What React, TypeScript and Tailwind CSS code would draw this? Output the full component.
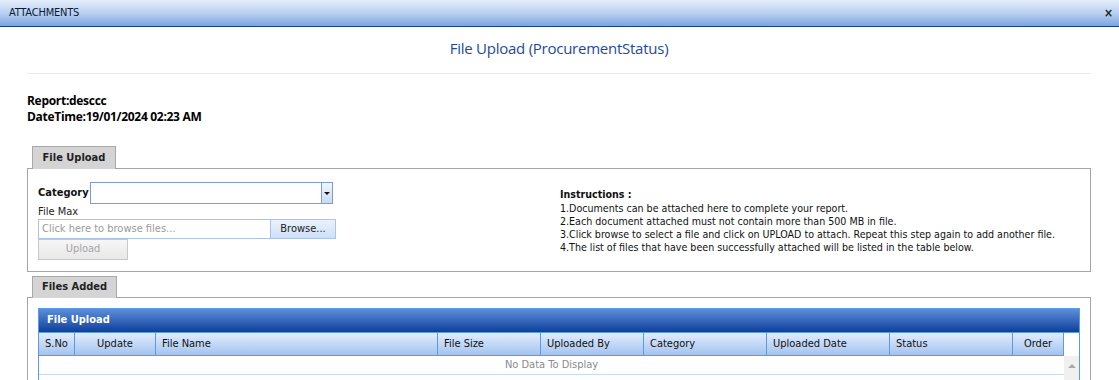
import React from "react";

const cols: { label: string; w: number; align: "left" | "center" }[] = [
  { label: "S.No", w: 36, align: "left" },
  { label: "Update", w: 81, align: "center" },
  { label: "File Name", w: 282, align: "left" },
  { label: "File Size", w: 103, align: "left" },
  { label: "Uploaded By", w: 103, align: "left" },
  { label: "Category", w: 123, align: "left" },
  { label: "Uploaded Date", w: 123, align: "left" },
  { label: "Status", w: 123, align: "left" },
  { label: "Order", w: 51, align: "center" },
];

export default function App() {
  const tahoma = "font-['DejaVu_Sans_Condensed','Liberation_Sans',sans-serif]";
  return (
    <div className={`w-[1119px] h-[380px] overflow-hidden bg-white text-[11px] text-black ${tahoma}`}>
      {/* Title bar */}
      <div className="h-[27px] flex items-center justify-between pl-[9px] pr-[6px] border-b border-[#15428b] bg-gradient-to-b from-[#e4eefb] via-[#b9d0f0] to-[#7da5df]">
        <span className="text-[11px] text-[#0b1a33] tracking-[-0.2px]">ATTACHMENTS</span>
        <span className="text-[12px] font-bold text-[#222] leading-none">×</span>
      </div>

      <div className="pl-[27px] pr-[28px]">
        {/* Heading */}
        <div className="h-[47px] flex items-center justify-center border-b border-[#ececec]">
          <span className="font-['Open_Sans',sans-serif] text-[15px] tracking-[-0.25px] text-[#1d4aa0] -mt-[3px]">
            File Upload (ProcurementStatus)
          </span>
        </div>

        {/* Report info */}
        <div className="pt-[19px] font-['Open_Sans',sans-serif] font-bold text-[12px] leading-[16px] tracking-[-0.3px]">
          <div>Report:desccc</div>
          <div>DateTime:19/01/2024 02:23 AM</div>
        </div>

        {/* Tab 1 */}
        <div className="mt-[21px] pl-[5px] flex">
          <div className="w-[84px] h-[23px] -mb-[1px] bg-[#d4d4d4] border border-[#a8a8a8] border-b-0 flex items-center justify-center font-bold text-[11px] text-[#222]">
            File Upload
          </div>
        </div>
        <div className="h-[104px] border border-[#a6a6a6] flex">
          <div className="w-[532px] shrink-0 pl-[10px] pt-[13px]">
            <div className="flex items-center h-[22px]">
              <span className="w-[52px] font-bold text-[11px] text-[#111]">Category</span>
              <div className="w-[243px] h-[22px] border border-[#7b9cd6] flex">
                <div className="flex-1" />
                <div className="w-[11px] border-l border-[#7b9cd6] bg-gradient-to-b from-[#f2f7fe] to-[#c7dbf5] flex items-center justify-center">
                  <div className="w-0 h-0 border-l-[3px] border-r-[3px] border-t-[3px] border-l-transparent border-r-transparent border-t-[#111]" />
                </div>
              </div>
            </div>
            <div className="h-[15px] leading-[15px] text-[11px] text-[#222]">File Max</div>
            <div className="flex h-[20px]">
              <div className="w-[232px] h-[20px] border border-[#a9c4ea] border-r-0 flex items-center pl-[3px] text-[#9a9a9a]">
                Click here to browse files...
              </div>
              <div className="w-[66px] h-[20px] border border-[#a9c4ea] bg-gradient-to-b from-[#e9f2fd] to-[#cfe0f7] flex items-center justify-center text-[#222]">
                Browse...
              </div>
            </div>
            <div className="w-[90px] h-[21px] border border-[#c8c8c8] bg-gradient-to-b from-[#f6f6f6] to-[#e8e8e8] flex items-center justify-center text-[#a5a5a5]">
              Upload
            </div>
          </div>
          <div className="pt-[19px] leading-[13px] text-[10.6px] text-[#111]">
            <div className="font-bold h-[14px]">Instructions :</div>
            <div>1.Documents can be attached here to complete your report.</div>
            <div>2.Each document attached must not contain more than 500 MB in file.</div>
            <div>3.Click browse to select a file and click on UPLOAD to attach. Repeat this step again to add another file.</div>
            <div>4.The list of files that have been successfully attached will be listed in the table below.</div>
          </div>
        </div>

        {/* Tab 2 */}
        <div className="mt-[4px] pl-[5px] flex">
          <div className="w-[85px] h-[22px] -mb-[1px] bg-[#d4d4d4] border border-[#a8a8a8] border-b-0 flex items-center justify-center font-bold text-[11px] text-[#222]">
            Files Added
          </div>
        </div>
        <div className="h-[120px] border border-[#a6a6a6] pl-[10px] pr-[10px] pt-[10px]">
          <div className="border border-[#5b9ae6] border-b-0 h-[110px] flex flex-col">
            <div className="h-[23px] shrink-0 flex items-center pl-[8px] bg-gradient-to-b from-[#5e8fdb] to-[#0e3f9b] text-white font-bold text-[11px]">
              File Upload
            </div>
            <div className="flex flex-1">
              <div className="flex flex-col">
                <div className="flex h-[23px] border-t border-[#5b9ae6]">
                  {cols.map((c) => (
                    <div
                      key={c.label}
                      style={{ width: c.w }}
                      className={`h-full flex items-center px-[6px] border-r border-[#5b9ae6] bg-gradient-to-b from-[#e1edfd] to-[#a4c3ef] text-[#111] ${
                        c.align === "center" ? "justify-center" : "justify-start"
                      }`}
                    >
                      {c.label}
                    </div>
                  ))}
                </div>
                <div className="h-[20px] border-t border-[#5b9ae6] border-b border-b-[#c9d9ef] flex items-center justify-center text-[#8a8a8a]">
                  No Data To Display
                </div>
              </div>
              <div className="flex-1 flex flex-col border-t border-[#5b9ae6]">
                <div className="h-[23px]" />
                <div className="flex-1 bg-[#f0f0f0] flex justify-center pt-[8px]">
                  <div className="w-0 h-0 border-l-[4px] border-r-[4px] border-b-[4px] border-l-transparent border-r-transparent border-b-[#a8a8a8]" />
                </div>
              </div>
            </div>
          </div>
        </div>
      </div>
    </div>
  );
}
